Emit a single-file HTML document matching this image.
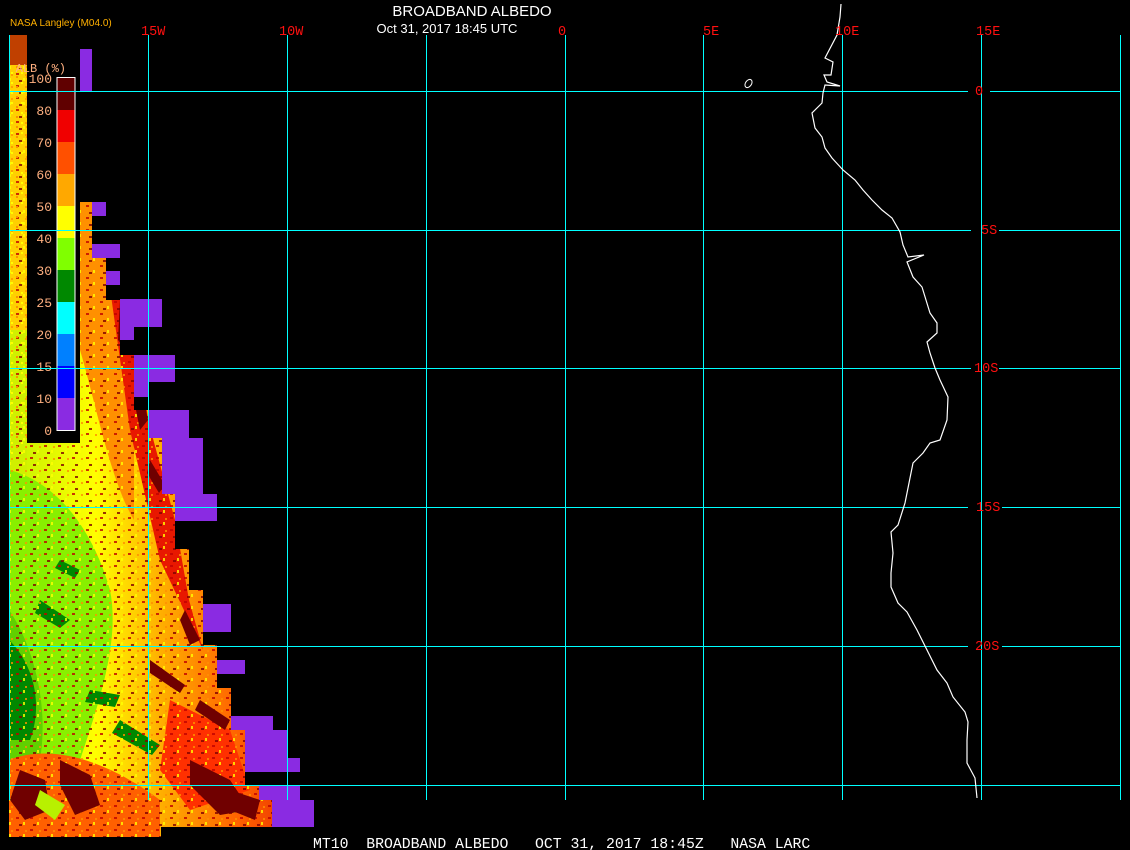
<!DOCTYPE html>
<html><head><meta charset="utf-8"><style>
html,body{margin:0;padding:0;background:#000;}
svg{display:block}
</style></head><body>
<svg width="1130" height="850" viewBox="0 0 1130 850" xmlns="http://www.w3.org/2000/svg">
<defs>
<linearGradient id="dg" x1="0" y1="0" x2="1" y2="0">
<stop offset="0" stop-color="#c0f000"/>
<stop offset="0.3" stop-color="#ffff00"/>
<stop offset="0.5" stop-color="#ffb000"/>
<stop offset="0.75" stop-color="#ff6000"/>
<stop offset="1" stop-color="#e02000"/>
</linearGradient>
<pattern id="sp" width="14" height="12" patternUnits="userSpaceOnUse">
<rect x="2" y="1" width="3" height="2" fill="#c00000"/>
<rect x="9" y="6" width="2" height="3" fill="#ffff00"/>
<rect x="5" y="8" width="3" height="2" fill="#800000"/>
<rect x="11" y="2" width="2" height="2" fill="#ff9000"/>
</pattern>
<pattern id="sp2" width="10" height="10" patternUnits="userSpaceOnUse">
<rect x="1" y="2" width="2" height="2" fill="#ffff00"/>
<rect x="6" y="6" width="2" height="2" fill="#ff9000"/>
</pattern>
<clipPath id="dc"><path d="M9,35 H27 V443 H80 V202 H92 V230 H92 V258 H106 V300 H120 V355 H134 V410 H148 V438 H162 V452 H175 V549 H189 V590 H203 V645 H217 V688 H231 V730 H245 V785 H259 V800 H272 V827 H161 V837 H9 Z"/></clipPath>
</defs>
<rect width="1130" height="850" fill="#000"/>
<g clip-path="url(#dc)">
<rect x="0" y="0" width="320" height="850" fill="url(#dg)"/>
<rect x="9" y="35" width="18" height="420" fill="#ffd000"/>
<rect x="9" y="330" width="18" height="200" fill="#d0f000"/>
<path d="M9,470 C50,480 90,520 110,590 C120,640 100,700 80,760 L9,780 Z" fill="#88f000"/>
<path d="M9,610 C30,640 50,700 40,760 L9,760 Z" fill="#60d000"/>
<path d="M9,640 C30,660 45,700 30,740 L9,740 Z" fill="#008800"/>
<path d="M40,600 l30,20 -10,8 -25,-15z M120,720 l40,25 -8,10 -40,-22z M90,690 l30,5 -5,12 -30,-5z M60,560 l20,10 -5,8 -20,-10z" fill="#008800"/>
<path d="M80,202 H134 V520 C110,480 95,400 80,350 Z" fill="#ff9000"/>
<path d="M106,260 L134,300 L148,420 L175,520 L189,600 L203,650 L160,560 L130,430 Z" fill="#e81800"/>
<path d="M9,760 C60,740 120,770 160,800 L160,837 L9,837 Z" fill="#ff6000"/>
<path d="M170,700 l60,30 20,60 -60,20 -30,-40z" fill="#ff3000"/>
<rect x="9" y="35" width="300" height="810" fill="url(#sp)" opacity="0.8"/>
<rect x="9" y="35" width="18" height="420" fill="url(#sp2)"/>
<path d="M120,300 l14,30 -8,20 -8,-10z M140,380 l8,40 -8,10 -6,-30z M185,610 l15,30 -10,5 -10,-25z M150,460 l15,25 -6,8 -12,-20z" fill="#700000"/>
<path d="M20,770 l25,10 5,30 -25,10 -15,-20z M60,760 l30,15 10,30 -25,10 -15,-30z M190,760 l40,20 20,30 -30,5 -30,-30z M200,700 l30,20 -5,10 -30,-20z M150,660 l35,25 -5,8 -30,-20z M230,790 l30,10 -5,20 -25,-10z" fill="#700000"/>
<path d="M40,790 l25,15 -10,15 -20,-15z" fill="#b8f000"/>
<rect x="9" y="35" width="18" height="30" fill="#c04000"/>
</g>
<g fill="#8a2be2">
<rect x="80" y="49" width="12" height="42"/>
<rect x="92" y="202" width="14" height="14"/>
<rect x="92" y="244" width="28" height="14"/>
<rect x="106" y="271" width="14" height="14"/>
<rect x="120" y="299" width="42" height="28"/>
<rect x="120" y="327" width="14" height="13"/>
<rect x="134" y="355" width="41" height="27"/>
<rect x="134" y="382" width="14" height="15"/>
<rect x="148" y="410" width="41" height="28"/>
<rect x="162" y="438" width="41" height="56"/>
<rect x="175" y="494" width="42" height="27"/>
<rect x="203" y="604" width="28" height="28"/>
<rect x="217" y="660" width="28" height="14"/>
<rect x="231" y="716" width="42" height="14"/>
<rect x="245" y="730" width="42" height="42"/>
<rect x="287" y="758" width="13" height="14"/>
<rect x="259" y="785" width="41" height="15"/>
<rect x="272" y="800" width="42" height="27"/>
</g>
<g>
<rect x="57" y="78" width="18" height="32" fill="#600000"/>
<rect x="57" y="110" width="18" height="32" fill="#f00000"/>
<rect x="57" y="142" width="18" height="32" fill="#ff5000"/>
<rect x="57" y="174" width="18" height="32" fill="#ffa800"/>
<rect x="57" y="206" width="18" height="32" fill="#ffff00"/>
<rect x="57" y="238" width="18" height="32" fill="#80ff00"/>
<rect x="57" y="270" width="18" height="32" fill="#008800"/>
<rect x="57" y="302" width="18" height="32" fill="#00ffff"/>
<rect x="57" y="334" width="18" height="32" fill="#0080ff"/>
<rect x="57" y="366" width="18" height="32" fill="#0000ff"/>
<rect x="57" y="398" width="18" height="32" fill="#8a2be2"/>
<rect x="57" y="77.5" width="18" height="353" fill="none" stroke="#fff" stroke-width="1"/>
</g>
<g font-family="Liberation Mono, monospace" font-size="13" fill="#ffb080" text-anchor="end">
<text x="52" y="83">100</text><text x="52" y="115">80</text><text x="52" y="147">70</text>
<text x="52" y="179">60</text><text x="52" y="211">50</text><text x="52" y="243">40</text>
<text x="52" y="275">30</text><text x="52" y="307">25</text><text x="52" y="339">20</text>
<text x="52" y="371">15</text><text x="52" y="403">10</text><text x="52" y="435">0</text>
<text x="66" y="72" font-size="12">ALB (%)</text>
</g>
<g stroke="#00ffff" stroke-width="1" fill="none" shape-rendering="crispEdges">
<path d="M9.5,35V800 M148.5,35V800 M287.5,35V800 M426.5,35V800 M565.5,35V800 M703.5,35V800 M842.5,35V800 M981.5,35V800 M1120.5,35V800"/>
<path d="M9,91.5H968 M990,91.5H1120 M9,230.5H971 M999,230.5H1120 M9,368.5H971 M999,368.5H1120 M9,507.5H968 M1002,507.5H1120 M9,646.5H968 M1002,646.5H1120 M9,785.5H1120"/>
</g>
<polyline fill="none" stroke="#fff" stroke-width="1.2" points="841,4 840,17 837,35 825,58 833,62 831,75 824,75 827,82 840,86 825,85 823,93 822,103 812,113 815,128 822,137 825,148 832,158 843,170 855,180 863,190 872,200 882,210 892,218 900,232 903,245 908,257 924,255 907,262 913,277 922,287 930,313 937,323 937,333 927,342 930,353 935,368 940,380 948,397 947,420 940,440 930,443 923,453 913,463 910,478 905,503 898,525 891,532 893,553 891,573 891,587 898,603 907,612 917,630 927,650 937,670 947,683 953,697 965,712 968,722 967,740 967,763 975,778 977,798"/>
<ellipse cx="748.5" cy="83.5" rx="3" ry="4.5" transform="rotate(35 748.5 83.5)" fill="none" stroke="#fff" stroke-width="1"/>
<g font-family="Liberation Mono, monospace" font-size="13.5" fill="#ff1010">
<text x="141" y="35">15W</text><text x="279" y="35">10W</text><text x="558" y="35">0</text>
<text x="703" y="35">5E</text><text x="835" y="35">10E</text><text x="976" y="35">15E</text>
<text x="975" y="95">0</text><text x="981" y="234">5S</text><text x="974" y="372">10S</text>
<text x="976" y="511">15S</text><text x="975" y="650">20S</text>
</g>
<text x="10" y="26" font-family="Liberation Sans, sans-serif" font-size="10" fill="#ffb000">NASA Langley (M04.0)</text>
<text x="472" y="16" font-family="Liberation Sans, sans-serif" font-size="15" fill="#fff" text-anchor="middle">BROADBAND ALBEDO</text>
<text x="447" y="33" font-family="Liberation Sans, sans-serif" font-size="13" fill="#fff" text-anchor="middle">Oct 31, 2017 18:45 UTC</text>
<text x="313" y="848" font-family="Liberation Mono, monospace" font-size="14.8" fill="#fff" xml:space="preserve">MT10  BROADBAND ALBEDO   OCT 31, 2017 18:45Z   NASA LARC</text>
</svg>
</body></html>
